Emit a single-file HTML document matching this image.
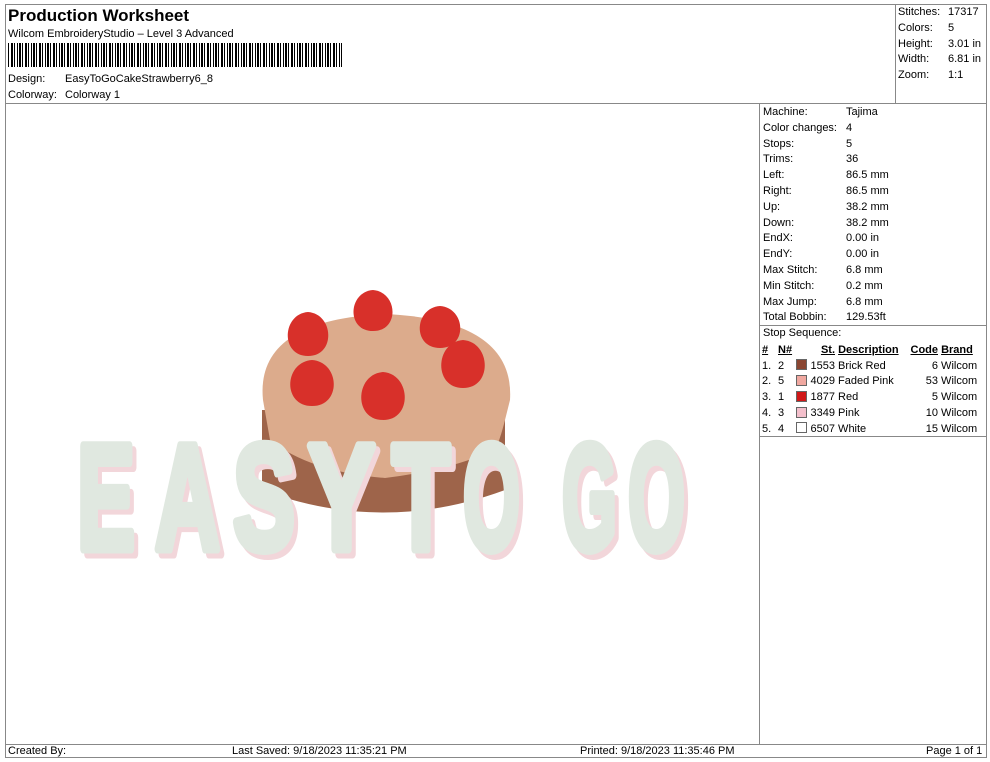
<!DOCTYPE html>
<html><head><meta charset="utf-8"><style>
body{margin:0;width:990px;height:762px;background:#fff;font-family:"Liberation Sans",sans-serif;font-size:11px;color:#000;position:relative;overflow:hidden}
.a{position:absolute;white-space:nowrap}
.ln{position:absolute;background:#888}
.bar{position:absolute;left:8px;top:43px;width:334px;height:24px;background:repeating-linear-gradient(90deg,#000 0 1px,#fff 1px 3px,#000 3px 5px,#fff 5px 6px,#000 6px 7px,#fff 7px 9px,#000 9px 10px,#fff 10px 11px,#000 11px 13px,#fff 13px 14px)}
table{border-collapse:collapse;font-size:11px;table-layout:fixed}
td{padding:0;height:15.8px;overflow:visible}
u{text-decoration:underline}
.sw{display:inline-block;width:9px;height:9px;border:1px solid #666;vertical-align:-1px}
</style></head><body>
<div class="ln" style="left:5px;top:4px;width:982px;height:1px"></div>
<div class="ln" style="left:5px;top:4px;width:1px;height:754px"></div>
<div class="ln" style="left:986px;top:4px;width:1px;height:754px"></div>
<div class="ln" style="left:5px;top:103px;width:982px;height:1px"></div>
<div class="ln" style="left:895px;top:4px;width:1px;height:100px"></div>
<div class="ln" style="left:759px;top:103px;width:1px;height:641px"></div>
<div class="ln" style="left:759px;top:325px;width:228px;height:1px"></div>
<div class="ln" style="left:759px;top:436px;width:228px;height:1px"></div>
<div class="ln" style="left:5px;top:744px;width:982px;height:1px"></div>
<div class="ln" style="left:5px;top:757px;width:982px;height:1px"></div>
<div class="a" style="left:8px;top:6px;font-size:17px;font-weight:bold">Production Worksheet</div>
<div class="a" style="left:8px;top:28px">Wilcom EmbroideryStudio – Level 3 Advanced</div>
<div class="bar"></div>
<div class="a" style="left:8px;top:73px">Design:</div><div class="a" style="left:65px;top:73px">EasyToGoCakeStrawberry6_8</div>
<div class="a" style="left:8px;top:89px">Colorway:</div><div class="a" style="left:65px;top:89px">Colorway 1</div>
<div class="a" style="left:898px;top:5px;line-height:15.8px">Stitches:<br>Colors:<br>Height:<br>Width:<br>Zoom:</div>
<div class="a" style="left:948px;top:5px;line-height:15.8px">17317<br>5<br>3.01 in<br>6.81 in<br>1:1</div>
<div class="a" style="left:763px;top:105px;line-height:15.8px">Machine:<br>Color changes:<br>Stops:<br>Trims:<br>Left:<br>Right:<br>Up:<br>Down:<br>EndX:<br>EndY:<br>Max Stitch:<br>Min Stitch:<br>Max Jump:<br>Total Bobbin:<br>Stop Sequence:</div>
<div class="a" style="left:846px;top:105px;line-height:15.8px">Tajima<br>4<br>5<br>36<br>86.5 mm<br>86.5 mm<br>38.2 mm<br>38.2 mm<br>0.00 in<br>0.00 in<br>6.8 mm<br>0.2 mm<br>6.8 mm<br>129.53ft</div>
<table class="a" style="left:762px;top:342px;width:222px">
<colgroup><col style="width:16px"><col style="width:18px"><col style="width:14px"><col style="width:25px"><col style="width:72px"><col style="width:31px"><col style="width:46px"></colgroup>
<tr style="font-weight:bold"><td><u>#</u></td><td><u>N#</u></td><td></td><td style="text-align:right"><u>St.</u></td><td>&nbsp;<u>Description</u></td><td style="text-align:right"><u>Code</u></td><td>&nbsp;<u>Brand</u></td></tr>
<tr><td>1.</td><td>2</td><td><span class="sw" style="background:#8a4632"></span></td><td style="text-align:right">1553</td><td>&nbsp;Brick Red</td><td style="text-align:right">6</td><td>&nbsp;Wilcom</td></tr>
<tr><td>2.</td><td>5</td><td><span class="sw" style="background:#f0a8a0"></span></td><td style="text-align:right">4029</td><td>&nbsp;Faded Pink</td><td style="text-align:right">53</td><td>&nbsp;Wilcom</td></tr>
<tr><td>3.</td><td>1</td><td><span class="sw" style="background:#d01818"></span></td><td style="text-align:right">1877</td><td>&nbsp;Red</td><td style="text-align:right">5</td><td>&nbsp;Wilcom</td></tr>
<tr><td>4.</td><td>3</td><td><span class="sw" style="background:#f4c0cc"></span></td><td style="text-align:right">3349</td><td>&nbsp;Pink</td><td style="text-align:right">10</td><td>&nbsp;Wilcom</td></tr>
<tr><td>5.</td><td>4</td><td><span class="sw" style="background:#fff"></span></td><td style="text-align:right">6507</td><td>&nbsp;White</td><td style="text-align:right">15</td><td>&nbsp;Wilcom</td></tr>
</table>
<svg class="a" style="left:0;top:0" width="760" height="740">
<path d="M262 410 L505 410 L505 490 Q383 535 262 490 Z" fill="#9e644a"/>
<path d="M263 400 Q255 320 385 314 Q515 320 510 400 L505 420 Q500 440 495 450 Q450 470 385 478 Q310 472 270 440 Z" fill="#dcab8c"/>
<g fill="#d8302a">
<path d="M308 312 C334 314 336 356 308 356 C280 356 282 314 308 312Z"/>
<path d="M373 290 C398 292 400 331 373 331 C346 331 348 292 373 290Z"/>
<path d="M440 306 C466 308 468 348 440 348 C412 348 414 308 440 306Z"/>
<path d="M463 340 C491 342 493 388 463 388 C433 388 435 342 463 340Z"/>
<path d="M312 360 C340 362 342 406 312 406 C282 406 284 362 312 360Z"/>
<path d="M383 372 C411 374 413 420 383 420 C353 420 355 374 383 372Z"/>
</g>
<g font-family="Liberation Sans" font-weight="bold" font-size="150" stroke-width="9" stroke-linejoin="round">
<g fill="#f2d6da" stroke="#f2d6da" transform="translate(4,5)">
<text x="77" y="549" textLength="58" lengthAdjust="spacingAndGlyphs">E</text>
<text x="155" y="549" textLength="65" lengthAdjust="spacingAndGlyphs">A</text>
<text x="233" y="549" textLength="62" lengthAdjust="spacingAndGlyphs">S</text>
<text x="308" y="549" textLength="67" lengthAdjust="spacingAndGlyphs">Y</text>
<text x="392" y="549" textLength="58" lengthAdjust="spacingAndGlyphs">T</text>
<text x="463" y="549" textLength="57" lengthAdjust="spacingAndGlyphs">O</text>
<text x="562" y="549" textLength="55" lengthAdjust="spacingAndGlyphs">G</text>
<text x="628" y="549" textLength="57" lengthAdjust="spacingAndGlyphs">O</text>
</g>
<g fill="#e0e8e0" stroke="#e0e8e0">
<text x="77" y="549" textLength="58" lengthAdjust="spacingAndGlyphs">E</text>
<text x="155" y="549" textLength="65" lengthAdjust="spacingAndGlyphs">A</text>
<text x="233" y="549" textLength="62" lengthAdjust="spacingAndGlyphs">S</text>
<text x="308" y="549" textLength="67" lengthAdjust="spacingAndGlyphs">Y</text>
<text x="392" y="549" textLength="58" lengthAdjust="spacingAndGlyphs">T</text>
<text x="463" y="549" textLength="57" lengthAdjust="spacingAndGlyphs">O</text>
<text x="562" y="549" textLength="55" lengthAdjust="spacingAndGlyphs">G</text>
<text x="628" y="549" textLength="57" lengthAdjust="spacingAndGlyphs">O</text>
</g>
</g>
</svg>
<div class="a" style="left:8px;top:745px">Created By:</div>
<div class="a" style="left:232px;top:745px">Last Saved: 9/18/2023 11:35:21 PM</div>
<div class="a" style="left:580px;top:745px">Printed: 9/18/2023 11:35:46 PM</div>
<div class="a" style="left:926px;top:745px">Page 1 of 1</div>
</body></html>
